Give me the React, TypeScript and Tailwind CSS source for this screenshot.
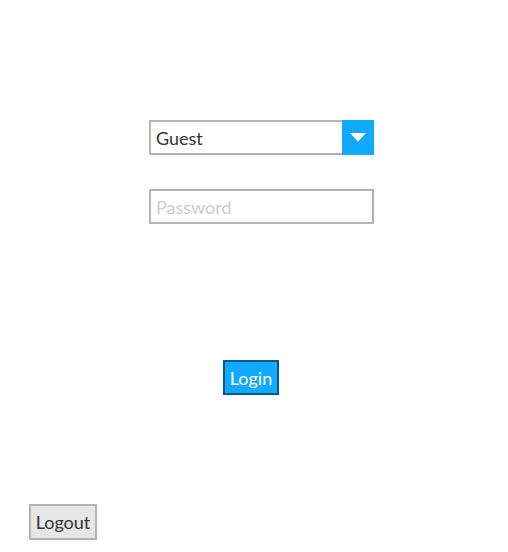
import React from "react";

export default function App() {
  return (
    <div className="w-[508px] h-[552px] bg-white relative" style={{ fontFamily: "Lato, 'Open Sans', sans-serif" }}>
      <div className="pt-[120px] pl-[149px] flex flex-col">
        <div className="relative w-[225px] h-[35px] border-2 border-[#b3b3b3] flex items-center pl-[5px] pt-[2px] text-[18px] text-[#333]">
          Guest
          <div className="absolute -right-[2px] -top-[2px] w-[32px] h-[35px] bg-[#11aaff] flex items-center justify-center">
            <svg width="16" height="9" viewBox="0 0 16 9"><polygon points="0,0 16,0 8,8.5" fill="#fff" /></svg>
          </div>
        </div>
        <div className="mt-[34px] w-[225px] h-[35px] border-2 border-[#b3b3b3] flex items-center pl-[5px] pt-[2px] text-[18px] text-[#cccccc]">
          Password
        </div>
      </div>
      <div className="mt-[136px] pl-[223px]">
        <button className="w-[56px] h-[35px] border-2 border-[#0b5a8c] bg-[#11aaff] text-white text-[18px] pt-[2px] flex items-center justify-center">
          Login
        </button>
      </div>
      <div className="mt-[109px] pl-[29px]">
        <button className="w-[68px] h-[36px] border-2 border-[#b3b3b3] bg-[#e6e6e6] text-[#333] text-[18px] flex items-center justify-center">
          Logout
        </button>
      </div>
    </div>
  );
}
